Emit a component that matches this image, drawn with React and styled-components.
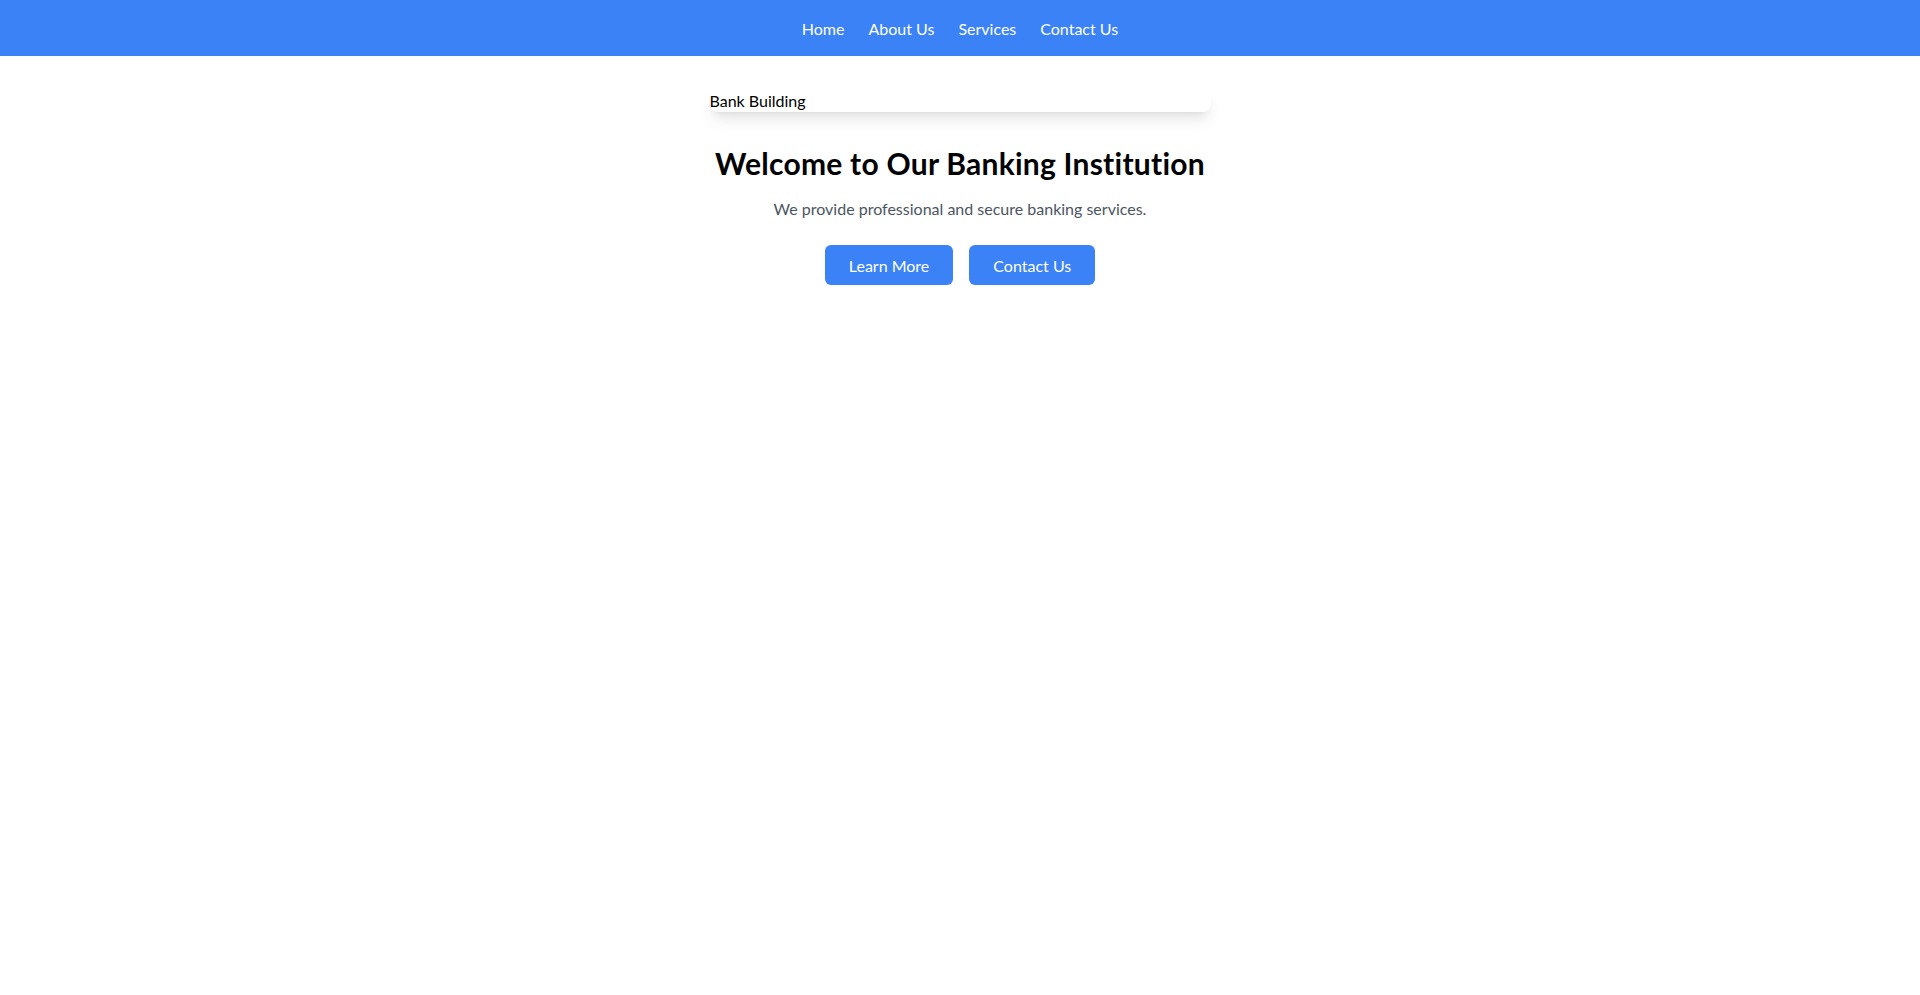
import styled, { createGlobalStyle } from "styled-components";

const GlobalStyle = createGlobalStyle`
    body {
        margin: 0;
        font-family: "Lato", "Liberation Sans", sans-serif;
        background: #ffffff;
        color: #000000;
    }
`;

const NavBar = styled.nav`
    background-color: #3b82f6;
    padding: 17px 0 15px;
`;

const NavList = styled.ul`
    list-style: none;
    margin: 0;
    padding: 0;
    display: flex;
    justify-content: center;
    gap: 24px;
`;

const NavLink = styled.a`
    color: #ffffff;
    font-size: 16px;
    line-height: 24px;
    text-decoration: none;
`;

const Main = styled.main`
    display: flex;
    flex-direction: column;
    align-items: center;
    padding-top: 32px;
    text-align: center;
`;

const ImageBox = styled.div`
    width: 501px;
    height: 24px;
    border-radius: 8px;
    box-shadow: 0 10px 15px -3px rgba(0, 0, 0, 0.1), 0 4px 6px -4px rgba(0, 0, 0, 0.1);
    font-size: 16px;
    line-height: 26px;
    text-align: left;
    margin-bottom: 33px;
`;

const Title = styled.h1`
    font-size: 30px;
    line-height: 36px;
    font-weight: 700;
    letter-spacing: 0.25px;
    margin: 0 0 16px;
`;

const Subtitle = styled.p`
    font-size: 16px;
    line-height: 24px;
    color: #4b5563;
    margin: 0 0 24px;
`;

const ButtonRow = styled.div`
    display: flex;
    gap: 16px;
`;

const Button = styled.button`
    background-color: #3b82f6;
    color: #ffffff;
    border: none;
    border-radius: 6px;
    padding: 9px 24px 7px;
    font-family: inherit;
    font-size: 16px;
    line-height: 24px;
    cursor: pointer;
`;

const links = ["Home", "About Us", "Services", "Contact Us"];

const App = () => {
    return (
        <>
            <GlobalStyle />
            <NavBar>
                <NavList>
                    {links.map((link) => (
                        <li key={link}>
                            <NavLink href="#">{link}</NavLink>
                        </li>
                    ))}
                </NavList>
            </NavBar>
            <Main>
                <ImageBox>Bank Building</ImageBox>
                <Title>Welcome to Our Banking Institution</Title>
                <Subtitle>We provide professional and secure banking services.</Subtitle>
                <ButtonRow>
                    <Button>Learn More</Button>
                    <Button>Contact Us</Button>
                </ButtonRow>
            </Main>
        </>
    );
};

export default App;
